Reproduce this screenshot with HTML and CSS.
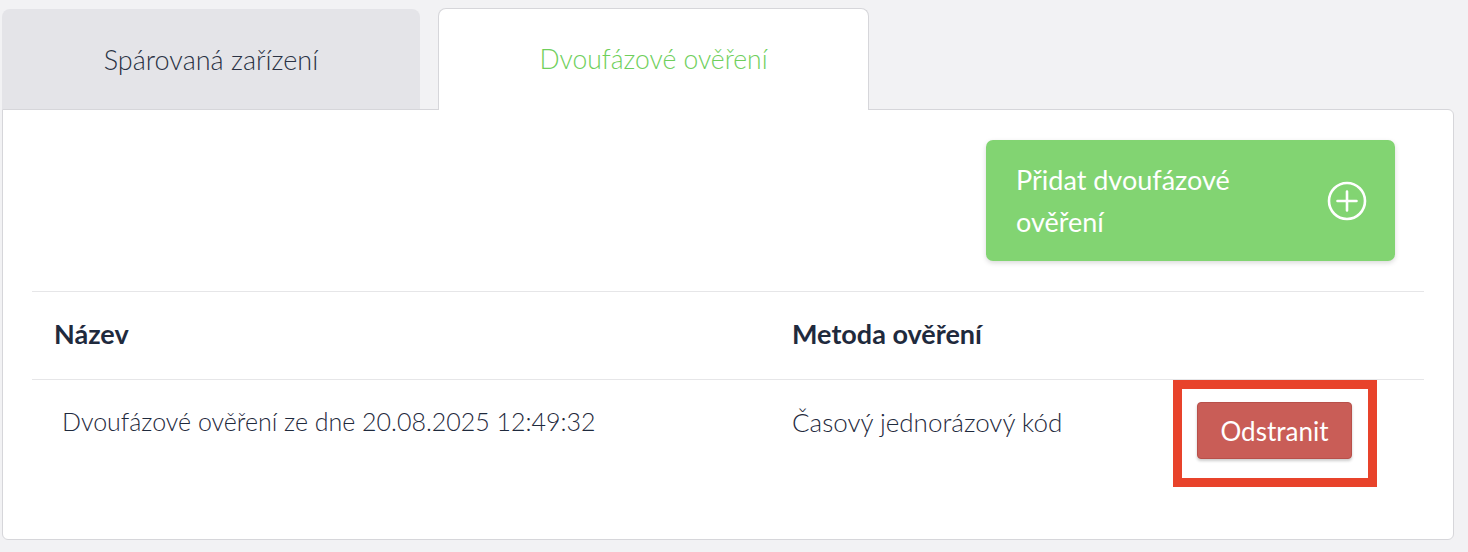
FILE: index.html
```html
<!DOCTYPE html>
<html lang="cs">
<head>
<meta charset="utf-8">
<link rel="stylesheet" href="styles.css">
<title>Dvoufázové ověření</title>
</head>
<body>
<div class="wrap">
  <div class="tabs">
    <div class="tab tab-inactive">Spárovaná zařízení</div>
    <div class="tab tab-active">Dvoufázové ověření</div>
  </div>
  <div class="panel">
    <div class="toolbar">
      <button class="btn-add">
        <span class="btn-add-text">Přidat dvoufázové ověření</span>
        <svg class="plus" width="40" height="40" viewBox="0 0 40 40" aria-hidden="true">
          <circle cx="20" cy="20" r="18" fill="none" stroke="#fff" stroke-width="2.6"/>
          <path d="M20 10.5v19M10.5 20h19" stroke="#fff" stroke-width="2.6" stroke-linecap="round"/>
        </svg>
      </button>
    </div>
    <div class="table">
      <div class="row head">
        <div class="cell c1">Název</div>
        <div class="cell c2">Metoda ověření</div>
        <div class="cell c3"></div>
      </div>
      <div class="row body-row">
        <div class="cell c1"><span class="indent">Dvoufázové ověření ze dne 20.08.2025 12:49:32</span></div>
        <div class="cell c2">Časový jednorázový kód</div>
        <div class="cell c3">
          <div class="highlight">
            <button class="btn-del">Odstranit</button>
          </div>
        </div>
      </div>
    </div>
  </div>
</div>
</body>
</html>
```

FILE: styles.css
```css
* { box-sizing: border-box; }
html, body { margin: 0; padding: 0; }
body {
  background: #f2f2f4;
  font-family: "Lato", "Liberation Sans", sans-serif;
  color: #1f2a3d;
}
.wrap {
  padding: 8px 0 0 2px;
  width: 1454px;
}
.tabs {
  display: flex;
  gap: 18px;
  align-items: flex-end;
}
.tab {
  height: 100px;
  display: flex;
  align-items: center;
  justify-content: center;
  font-size: 27px;
  font-weight: 300;
  border-radius: 8px 8px 0 0;
}
.tab-inactive {
  width: 418px;
  background: #e4e4e8;
  color: #2a3244;
}
.tab-active {
  width: 431px;
  height: 102px;
  background: #fff;
  color: #6fcf5c;
  font-size: 26.5px;
  border: 1px solid #d6d6da;
  border-bottom: none;
  margin-bottom: -1px;
  position: relative;
  z-index: 1;
  padding-bottom: 2px;
}
.panel {
  background: #fff;
  border: 1px solid #d6d6da;
  border-radius: 0 6px 6px 6px;
  height: 431px;
  padding: 30px 29px 0 29px;
}
.toolbar {
  display: flex;
  justify-content: flex-end;
  padding-right: 29px;
  margin-bottom: 30px;
}
.btn-add {
  width: 409px;
  height: 121px;
  background: #82d472;
  border: none;
  border-radius: 7px;
  box-shadow: 0 2px 5px rgba(0,0,0,0.15);
  display: flex;
  align-items: center;
  justify-content: space-between;
  padding: 0 28px 0 30px;
  color: #fff;
  font-family: inherit;
  font-size: 27px;
  font-weight: 400;
  text-align: left;
  line-height: 42px;
}
.btn-add-text { width: 240px; }
.plus { flex: none; }
.table { width: 100%; }
.row {
  display: grid;
  grid-template-columns: 738px 403px 1fr;
  border-top: 1px solid #e6e6e8;
}
.head { height: 88px; }
.head .cell {
  font-weight: 700;
  font-size: 27px;
  padding-left: 22px;
  padding-bottom: 4px;
  display: flex;
  align-items: center;
}
.body-row .cell {
  font-size: 25px;
  font-weight: 300;
  padding-left: 22px;
  padding-top: 26px;
}
.body-row .c2 { font-size: 26px; }
.indent { padding-left: 8px; }
.body-row .c3 { padding: 0; }
.highlight {
  width: 204px;
  height: 107px;
  border: 9px solid #e8432b;
  padding: 13px 0 0 15px;
}
.btn-del {
  width: 155px;
  height: 57px;
  background: #c95d57;
  border: 1px solid #b8504a;
  border-radius: 4px;
  color: #fff;
  font-family: inherit;
  font-size: 26px;
  font-weight: 400;
  box-shadow: 0 2px 3px rgba(0,0,0,0.2);
}
```
